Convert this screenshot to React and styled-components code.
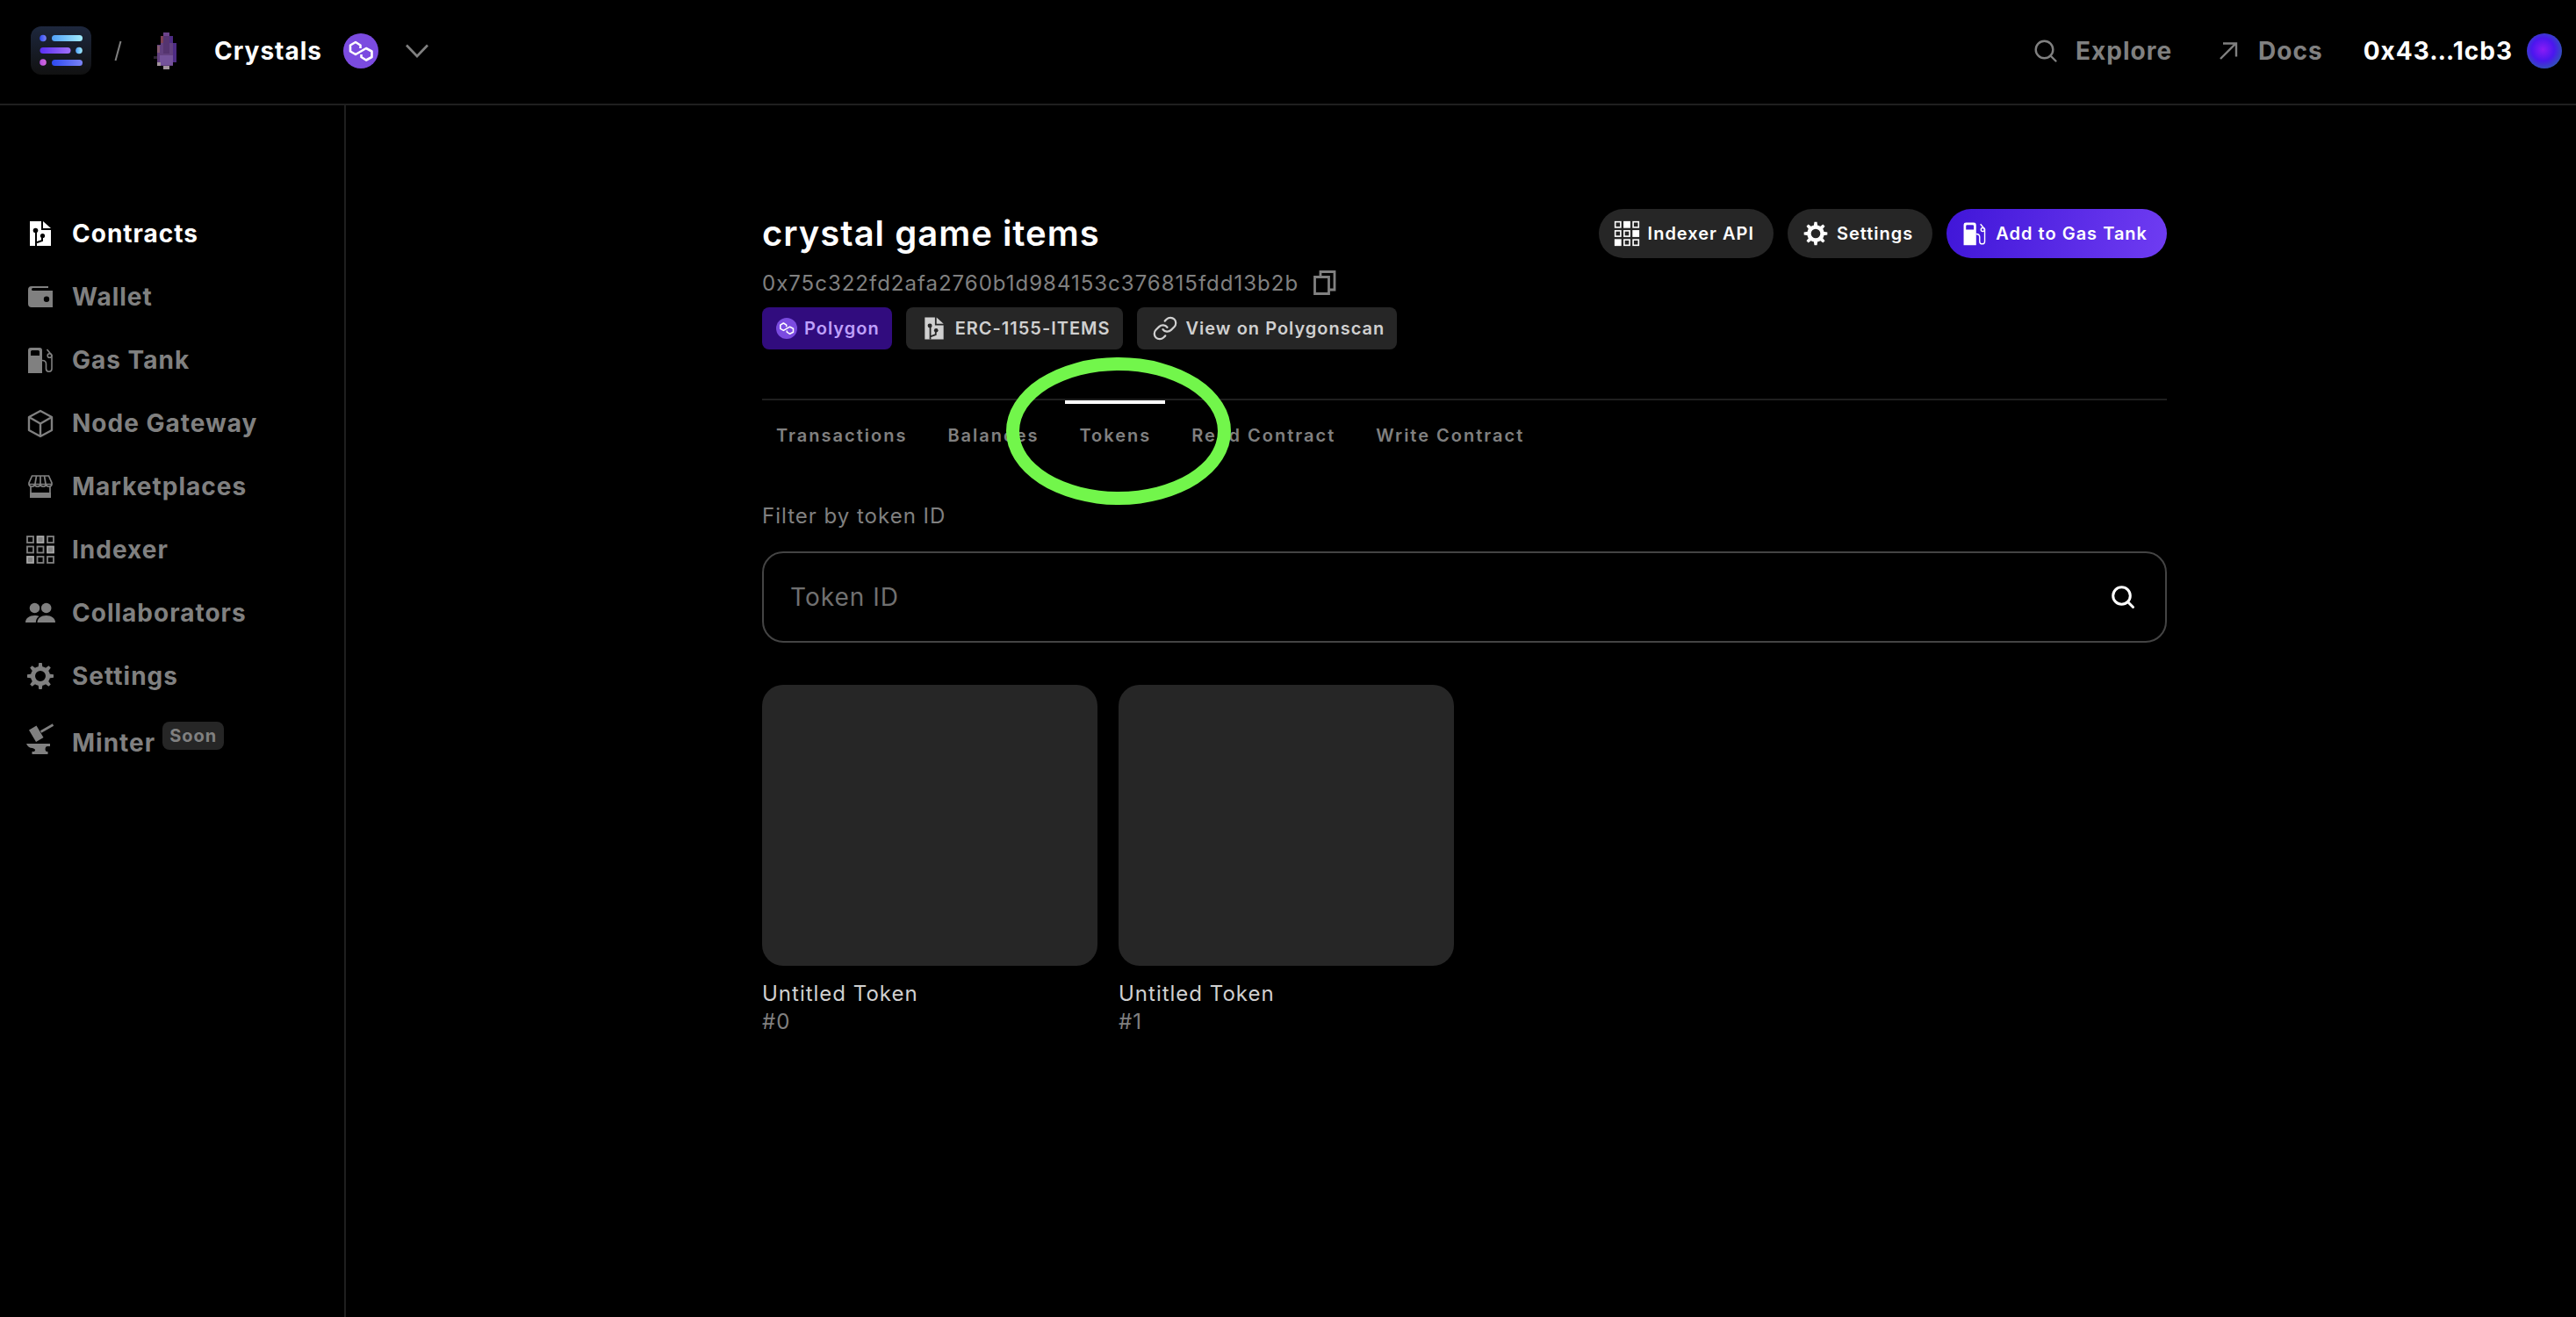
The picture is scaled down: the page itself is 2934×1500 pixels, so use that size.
import React from "react";
import styled, { createGlobalStyle } from "styled-components";

const color = {
  bg: "#000000",
  line: "#1f1f1f",
  surface: "#262626",
  muted: "#808080",
  soft: "#d0d0d0",
  white: "#ffffff",
};

const GlobalStyle = createGlobalStyle`
  *, *::before, *::after { box-sizing: border-box; }
  body {
    margin: 0;
    background: ${color.bg};
    color: ${color.white};
    font-family: Inter, "Liberation Sans", sans-serif;
    font-size: 28px;
    letter-spacing: 1px;
  }
  button, input { font: inherit; letter-spacing: inherit; color: inherit; }
  h1, p, ul { margin: 0; padding: 0; }
  ul { list-style: none; }
  a { color: inherit; text-decoration: none; }
  svg { display: block; flex: none; }
`;

const Page = styled.div`
  display: flex;
  flex-direction: column;
  min-height: 100vh;
`;

const Header = styled.header`
  display: flex;
  align-items: center;
  justify-content: space-between;
  height: 120px;
  padding: 0 16px 2px 34px;
  border-bottom: 2px solid ${color.line};
`;

const HeaderGroup = styled.div`
  display: flex;
  align-items: center;
  gap: ${(p) => p.$gap}px;
`;

const PlainButton = styled.button`
  display: flex;
  align-items: center;
  gap: ${(p) => p.$gap}px;
  padding: 0;
  border: 0;
  background: none;
  font-weight: 700;
  line-height: 40px;
  cursor: pointer;
`;

const HeaderLink = styled.a`
  display: flex;
  align-items: center;
  gap: 16px;
  color: ${color.muted};
  font-weight: 700;
  line-height: 40px;
`;

const Avatar = styled.span`
  width: 40px;
  height: 40px;
  border-radius: 50%;
  background: radial-gradient(circle at 46% 46%, #8a1cf6 0%, #4a17ee 42%, #2f55b4 76%);
`;

const Body = styled.div`
  display: flex;
  flex: 1;
`;

const Sidebar = styled.nav`
  flex: none;
  width: 394px;
  padding: 110px 16px 0 28px;
  border-right: 2px solid ${color.line};
`;

const NavLink = styled.a`
  display: flex;
  align-items: center;
  gap: 18px;
  height: 72px;
  color: ${(p) => (p.$active ? color.white : color.muted)};
  font-weight: 700;
`;

const NavLabel = styled.span`
  display: flex;
  align-items: center;
  gap: 8px;
  padding-top: ${(p) => (p.$lowered ? 8 : 0)}px;
`;

const SoonBadge = styled.span`
  margin-bottom: 16px;
  padding: 0 8px;
  border-radius: 8px;
  background: ${color.surface};
  font-size: 20px;
  line-height: 32px;
`;

const Main = styled.main`
  flex: 1;
  display: flex;
  justify-content: center;
  padding: 118px 32px 40px 40px;
`;

const Content = styled.div`
  width: 100%;
  max-width: 1600px;
`;

const TitleRow = styled.div`
  display: flex;
  justify-content: space-between;
  align-items: center;
`;

const Title = styled.h1`
  font-size: 40px;
  font-weight: 600;
  line-height: 56px;
`;

const Actions = styled.div`
  display: flex;
  gap: 16px;
`;

const ActionButton = styled.button`
  display: flex;
  align-items: center;
  gap: 8px;
  height: 56px;
  padding: 0 22px 0 16px;
  border: 0;
  border-radius: 28px;
  background: ${(p) =>
    p.$primary ? "linear-gradient(100deg, #4016d8, #6f3cf2)" : color.surface};
  font-size: 20px;
  font-weight: 600;
  cursor: pointer;
`;

const AddressRow = styled.div`
  display: flex;
  align-items: center;
  gap: 16px;
  height: 56px;
  color: ${color.muted};
  font-size: 24px;
`;

const IconButton = styled.button`
  padding: 0;
  border: 0;
  background: none;
  cursor: pointer;
`;

const Chips = styled.div`
  display: flex;
  gap: 16px;
`;

const Chip = styled.span`
  display: flex;
  align-items: center;
  gap: 8px;
  height: 48px;
  padding: 0 14px 0 16px;
  border-radius: 8px;
  background: ${(p) => (p.$brand ? "#310c7e" : color.surface)};
  color: ${(p) => (p.$brand ? "#bfa0fb" : color.soft)};
  font-size: 20px;
  font-weight: 600;
`;

const Tabs = styled.div`
  display: flex;
  gap: 14px;
  margin-top: 56px;
  border-top: 2px solid ${color.line};
`;

const Tab = styled.button`
  position: relative;
  height: 80px;
  padding: 0 16px 4px;
  border: 0;
  border-top: 4px solid ${(p) => (p.$active ? color.white : "transparent")};
  background: none;
  color: ${color.muted};
  font-size: 20px;
  font-weight: 600;
  letter-spacing: 2px;
  cursor: pointer;
`;

const Highlight = styled.span`
  position: absolute;
  z-index: 1;
  top: -53px;
  left: 50%;
  width: 256px;
  height: 168px;
  margin-left: -124px;
  border: 15px solid #72f64b;
  border-radius: 50%;
  pointer-events: none;
`;

const FilterLabel = styled.label`
  display: block;
  margin-top: 32px;
  color: ${color.muted};
  font-size: 24px;
  line-height: 40px;
`;

const SearchBox = styled.div`
  display: flex;
  align-items: center;
  height: 104px;
  margin-top: 20px;
  padding: 0 34px 0 30px;
  border: 2px solid #444444;
  border-radius: 24px;
`;

const SearchInput = styled.input`
  flex: 1;
  min-width: 0;
  padding: 0;
  border: 0;
  outline: 0;
  background: none;
  &::placeholder { color: #707070; opacity: 1; }
`;

const TokenGrid = styled.ul`
  display: grid;
  grid-template-columns: repeat(4, 1fr);
  gap: 24px;
  margin-top: 48px;
`;

const TokenImage = styled.div`
  height: 320px;
  margin-bottom: 16px;
  border-radius: 24px;
  background: ${color.surface};
`;

const TokenText = styled.p`
  color: ${(p) => (p.$muted ? color.muted : color.soft)};
  font-size: 24px;
  line-height: 32px;
`;

const Logo = () => (
  <svg width="70" height="56" viewBox="0 0 70 56" aria-hidden="true">
    <defs>
      <linearGradient id="lg-bg" x1="0" y1="0" x2="0" y2="1"><stop stopColor="#1d273d" /><stop offset="1" stopColor="#111111" /></linearGradient>
      <linearGradient id="lg-a"><stop stopColor="#4f9ff8" /><stop offset="1" stopColor="#a3ecfb" /></linearGradient>
      <linearGradient id="lg-b"><stop stopColor="#5a2ff5" /><stop offset="1" stopColor="#a070f8" /></linearGradient>
      <linearGradient id="lg-c"><stop stopColor="#2d4af2" /><stop offset="1" stopColor="#7a83f6" /></linearGradient>
      <linearGradient id="lg-d"><stop stopColor="#b44ee0" /><stop offset="1" stopColor="#d56ae0" /></linearGradient>
    </defs>
    <rect x="1" width="69" height="55" rx="12" fill="url(#lg-bg)" />
    <circle cx="15" cy="13.5" r="3.8" fill="url(#lg-c)" />
    <rect x="25" y="10" width="35" height="7" rx="3.5" fill="url(#lg-a)" />
    <rect x="11.5" y="24" width="35" height="7" rx="3.5" fill="url(#lg-b)" />
    <circle cx="56" cy="27.5" r="3.8" fill="url(#lg-a)" />
    <circle cx="15" cy="41" r="3.8" fill="url(#lg-d)" />
    <rect x="25" y="38" width="35" height="7" rx="3.5" fill="url(#lg-c)" />
  </svg>
);

const Slash = () => (
  <svg width="12" height="24" viewBox="0 0 12 24" aria-hidden="true">
    <path d="M9.500 1 3.500 23" stroke="#808080" strokeWidth="2" />
  </svg>
);

const Crystal = () => (
  <svg width="56" height="42" viewBox="-11 0 56 42" shapeRendering="crispEdges" aria-hidden="true">
    <path d="M11 0h7v4h4v8h4v22h-4v4H4V14h4V4h3z" fill="#62407f" />
    <path d="M11 4h7v20h-7z" fill="#553470" />
    <path d="M11 0h7v4h-7z" fill="#6b428b" />
    <path d="M18 4h4v8h-4z" fill="#4d2b83" />
    <path d="M22 12h4v22h-4z" fill="#4d2b83" />
    <path d="M7 26h15v11H7z" fill="#74529a" />
    <path d="M8 4h3v8H8z" fill="#7e4054" />
    <path d="M4 15h3v8H4z" fill="#855a72" />
    <path d="M4 34h4v4H4zM11 38h7v4h-7z" fill="#a3949e" />
    <path d="M0 27h4v3H0z" fill="#2c2330" />
  </svg>
);

const PolygonIcon = ({ size }) => (
  <svg width={size} height={size} viewBox="0 0 40 40" aria-hidden="true">
    <circle cx="20" cy="20" r="20" fill="#7b4be0" />
    <path
      d="M19.500 17v-3.500L14 10l-6 3.500v7l6 3.500 12-7 6.500 3.500V27L26 30.500 20.500 27v-3"
      fill="none" stroke="#fff" strokeWidth="2.6" strokeLinejoin="round"
    />
  </svg>
);

const Chevron = () => (
  <svg width="44" height="18" viewBox="-6 0 44 18" aria-hidden="true">
    <path d="M2 2.500 14 15 26 2.500" fill="none" stroke="#808080" strokeWidth="2.6" />
  </svg>
);

const SearchIcon = ({ width = 28, stroke }) => (
  <svg width={width} height="28" viewBox="0 0 28 28" fill="none" stroke="currentColor" strokeWidth={stroke} aria-hidden="true">
    <circle cx="12.5" cy="12.5" r="9.8" />
    <path d="m19.500 19.500 6 6" strokeLinecap="round" />
  </svg>
);

const ArrowIcon = () => (
  <svg width="36" height="24" viewBox="-6 0 36 24" fill="none" stroke="currentColor" strokeWidth="2.4" aria-hidden="true">
    <path d="M3 21 20 4M6 3.500h15v15" />
  </svg>
);

const iconBox = { width: 36, height: 36, viewBox: "0 0 36 36", fill: "currentColor", "aria-hidden": true };

const ContractIcon = ({ hole = color.bg, ...rest }) => (
  <svg {...iconBox} {...rest}>
    <path d="M6 4h13v10h11v18H6z" />
    <path d="M21 4v8h9z" />
    <g fill="none" stroke={hole} strokeWidth="2">
      <path d="M13 15v17M13 28.500l7-2.500v-6" />
    </g>
    <circle cx="12.5" cy="14.5" r="2.8" fill={hole} />
    <circle cx="20.5" cy="20.5" r="2.6" fill={hole} />
  </svg>
);

const WalletIcon = () => (
  <svg {...iconBox}>
    <path fillRule="evenodd" d="M8 6h19v2H9.500a1.500 1.500 0 0 0 0 3H32v19H8a4 4 0 0 1-4-4V10a4 4 0 0 1 4-4zm17 11.500a3.200 3.200 0 1 0 0 6.400 3.200 3.200 0 0 0 0-6.400z" />
  </svg>
);

const GasIcon = (props) => (
  <svg {...iconBox} {...props}>
    <path fillRule="evenodd" d="M7 4h10a3 3 0 0 1 3 3v26H4V7a3 3 0 0 1 3-3zm1.500 3A1.500 1.500 0 0 0 7 8.500V13h10V8.500A1.500 1.500 0 0 0 15.500 7z" />
    <path d="M20 18.500c3 0 4.500 1 4.500 4V28a3 3 0 0 0 6.500 0V12.500L25.500 6" fill="none" stroke="currentColor" strokeWidth="1.6" />
    <circle cx="28.5" cy="13" r="2.3" fill="none" stroke="currentColor" strokeWidth="1.6" />
  </svg>
);

const CubeIcon = () => (
  <svg {...iconBox} fill="none" stroke="currentColor" strokeWidth="2.4" strokeLinejoin="round">
    <path d="m18 4 13 7v15l-13 7-13-7V11zM5 11l13 7.500L31 11M18 18.500V33" />
  </svg>
);

const MarketIcon = () => (
  <svg {...iconBox} fill="none" stroke="currentColor" strokeWidth="1.7">
    <path d="M8.500 6h19L31 14v1.500H5V14zM13.500 6l-1.500 9M18 6v9M22.500 6l1.500 9M5 15a3.200 3.200 0 0 0 6.500 0 3.200 3.200 0 0 0 6.500 0 3.200 3.200 0 0 0 6.500 0 3.200 3.200 0 0 0 6.500 0M7 18v12M29 18v12" />
    <path d="M6 25h24v6H6z" fill="currentColor" stroke="none" />
  </svg>
);

const filledCells = [1, 5, 6];
const IndexerIcon = ({ accent, ...rest }) => (
  <svg {...iconBox} {...rest}>
    {[...Array(9).keys()].map((i) => {
      const x = 3 + (i % 3) * 11.5;
      const y = 3 + Math.floor(i / 3) * 11.5;
      const filled = filledCells.includes(i);
      return (
        <rect
          key={i} x={x} y={y} width="7" height="7"
          fill={filled ? "currentColor" : "none"}
          stroke={filled ? accent : "currentColor"} strokeWidth="1.8"
        />
      );
    })}
  </svg>
);

const PeopleIcon = () => (
  <svg {...iconBox}>
    <circle cx="11.5" cy="12.5" r="5.8" />
    <circle cx="24.7" cy="12.5" r="5.8" />
    <path d="M1 29c0-5 4.500-8 10.500-8 2 0 3.500.3 5 .9-2.700 1.500-3.500 4-3.700 7.100z" />
    <path d="M14.500 29c0-5 4.500-8 10.200-8S35 24 35 29z" />
  </svg>
);

const GearIcon = (props) => (
  <svg {...iconBox} {...props}>
    <circle cx="18" cy="18" r="8.5" fill="none" stroke="currentColor" strokeWidth="5" />
    {[0, 45, 90, 135, 180, 225, 270, 315].map((a) => (
      <path key={a} d="M16.300 3h3.400l.8 5.500h-5z" transform={`rotate(${a} 18 18)`} />
    ))}
  </svg>
);

const MinterIcon = () => (
  <svg {...iconBox}>
    <path d="m5 7.500 8.500-5 8 13.500-8.500 5z" />
    <path d="m18.500 9.500 14-8" stroke="currentColor" strokeWidth="2.6" />
    <path d="M2 23h27v3h-3c-3 0-3 5-1 6h1.500v3H8.500v-3H11c2-2 1-3-2-4-3 0-6-2-7-5z" />
  </svg>
);

const CopyIcon = () => (
  <svg width="28" height="28" viewBox="0 0 28 28" fill="none" stroke="currentColor" strokeWidth="2.8" aria-hidden="true">
    <path d="M2.500 7.500h16v19h-16zM9 7V1.500h16V22h-6" />
  </svg>
);

const LinkIcon = () => (
  <svg width="32" height="32" viewBox="-1 -1 26 26" fill="none" stroke="currentColor" strokeWidth="1.8" strokeLinecap="round" aria-hidden="true">
    <path d="M10 13a5 5 0 0 0 7.540.54l3-3a5 5 0 0 0-7.070-7.070l-1.720 1.710" />
    <path d="M14 11a5 5 0 0 0-7.540-.54l-3 3a5 5 0 0 0 7.070 7.070l1.710-1.710" />
  </svg>
);

const navItems = [
  { label: "Contracts", icon: <ContractIcon />, active: true },
  { label: "Wallet", icon: <WalletIcon /> },
  { label: "Gas Tank", icon: <GasIcon /> },
  { label: "Node Gateway", icon: <CubeIcon /> },
  { label: "Marketplaces", icon: <MarketIcon /> },
  { label: "Indexer", icon: <IndexerIcon accent="#a8a8a8" /> },
  { label: "Collaborators", icon: <PeopleIcon /> },
  { label: "Settings", icon: <GearIcon /> },
  { label: "Minter", icon: <MinterIcon />, badge: "Soon" },
];

const tabs = ["Transactions", "Balances", "Tokens", "Read Contract", "Write Contract"];
const tokens = [0, 1];

export default function App() {
  return (
    <Page>
      <GlobalStyle />
      <Header>
        <HeaderGroup $gap={24}>
          <a href="#home" aria-label="Home"><Logo /></a>
          <Slash />
          <PlainButton type="button" $gap={24}>
            <Crystal />
            Crystals
            <PolygonIcon size={40} />
            <Chevron />
          </PlainButton>
        </HeaderGroup>
        <HeaderGroup $gap={46}>
          <HeaderLink href="#explore"><SearchIcon width={36} stroke="2.4" />Explore</HeaderLink>
          <HeaderLink href="#docs"><ArrowIcon />Docs</HeaderLink>
          <PlainButton type="button" $gap={16}>0x43…1cb3<Avatar /></PlainButton>
        </HeaderGroup>
      </Header>
      <Body>
        <Sidebar>
          {navItems.map((item) => (
            <NavLink key={item.label} href={`#${item.label}`} $active={item.active}>
              {item.icon}
              <NavLabel $lowered={!!item.badge}>
                {item.label}
                {item.badge && <SoonBadge>{item.badge}</SoonBadge>}
              </NavLabel>
            </NavLink>
          ))}
        </Sidebar>
        <Main>
          <Content>
            <TitleRow>
              <Title>crystal game items</Title>
              <Actions>
                <ActionButton type="button"><IndexerIcon width="32" height="32" accent="currentColor" />Indexer API</ActionButton>
                <ActionButton type="button"><GearIcon width="32" height="32" />Settings</ActionButton>
                <ActionButton type="button" $primary><GasIcon width="32" height="32" />Add to Gas Tank</ActionButton>
              </Actions>
            </TitleRow>
            <AddressRow>
              0x75c322fd2afa2760b1d984153c376815fdd13b2b
              <IconButton type="button" aria-label="Copy address"><CopyIcon /></IconButton>
            </AddressRow>
            <Chips>
              <Chip $brand><PolygonIcon size={24} />Polygon</Chip>
              <Chip><ContractIcon hole={color.surface} width="32" height="32" />ERC-1155-ITEMS</Chip>
              <Chip as="a" href="#polygonscan"><LinkIcon />View on Polygonscan</Chip>
            </Chips>
            <Tabs role="tablist">
              {tabs.map((tab) => (
                <Tab key={tab} type="button" role="tab" aria-selected={tab === "Tokens"} $active={tab === "Tokens"}>
                  {tab}
                  {tab === "Tokens" && <Highlight />}
                </Tab>
              ))}
            </Tabs>
            <FilterLabel htmlFor="token-id">Filter by token ID</FilterLabel>
            <SearchBox>
              <SearchInput id="token-id" placeholder="Token ID" />
              <IconButton type="button" aria-label="Search"><SearchIcon stroke="3" /></IconButton>
            </SearchBox>
            <TokenGrid>
              {tokens.map((id) => (
                <li key={id}>
                  <TokenImage />
                  <TokenText>Untitled Token</TokenText>
                  <TokenText $muted>#{id}</TokenText>
                </li>
              ))}
            </TokenGrid>
          </Content>
        </Main>
      </Body>
    </Page>
  );
}
